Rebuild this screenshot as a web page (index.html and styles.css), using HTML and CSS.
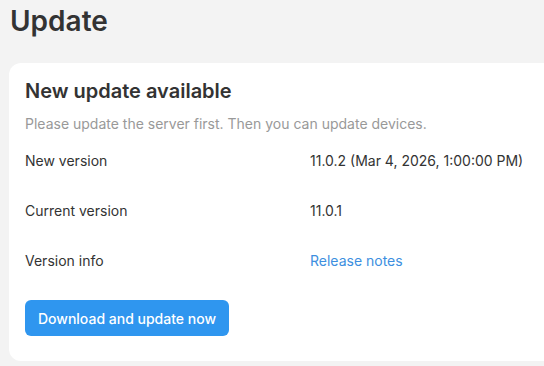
FILE: index.html
```html
<!DOCTYPE html>
<html>
<head>
<meta charset="utf-8">
<link rel="stylesheet" href="styles.css">
</head>
<body>
<div class="page">
  <h1 class="page-title">Update</h1>
  <section class="card">
    <h2 class="card-title">New update available</h2>
    <p class="hint">Please update the server first. Then you can update devices.</p>
    <div class="rows">
      <div class="row"><span class="label">New version</span><span class="value">11.0.2 (Mar 4, 2026, 1:00:00 PM)</span></div>
      <div class="row"><span class="label">Current version</span><span class="value">11.0.1</span></div>
      <div class="row"><span class="label">Version info</span><a class="value link" href="#">Release notes</a></div>
    </div>
    <button class="btn">Download and update now</button>
  </section>
</div>
</body>
</html>
```
FILE: styles.css
```css
html, body {
  margin: 0;
  padding: 0;
  background: #f3f3f3;
  overflow: hidden;
}
body {
  font-family: Inter, "Noto Sans", sans-serif;
  color: #333;
}
.page {
  padding: 4px 0 0 9px;
  width: 620px;
}
.page-title {
  margin: 0 0 0 1px;
  font-size: 28px;
  font-weight: 600;
  line-height: 34px;
  color: #333;
}
.card {
  margin-top: 25px;
  background: #fff;
  border-radius: 12px;
  padding: 16px 16px 25px 16px;
  width: 588px;
}
.card-title {
  margin: 0;
  font-size: 20px;
  font-weight: 600;
  line-height: 24px;
  color: #333;
}
.hint {
  margin: 11px 0 0;
  font-size: 14px;
  line-height: 20px;
  color: #999;
}
.rows {
  margin-top: 1px;
  display: flex;
  flex-direction: column;
}
.row {
  display: grid;
  grid-template-columns: 285px 1fr;
  height: 50px;
  align-items: center;
  font-size: 14px;
  color: #333;
}
.link {
  color: #3d8fe0;
  text-decoration: none;
}
.btn {
  margin-top: 15px;
  height: 36px;
  width: 204px;
  border: none;
  border-radius: 6px;
  background: #2f96ef;
  color: #fff;
  font-family: Inter, sans-serif;
  font-size: 14px;
  font-weight: 500;
  padding: 0;
}
```
